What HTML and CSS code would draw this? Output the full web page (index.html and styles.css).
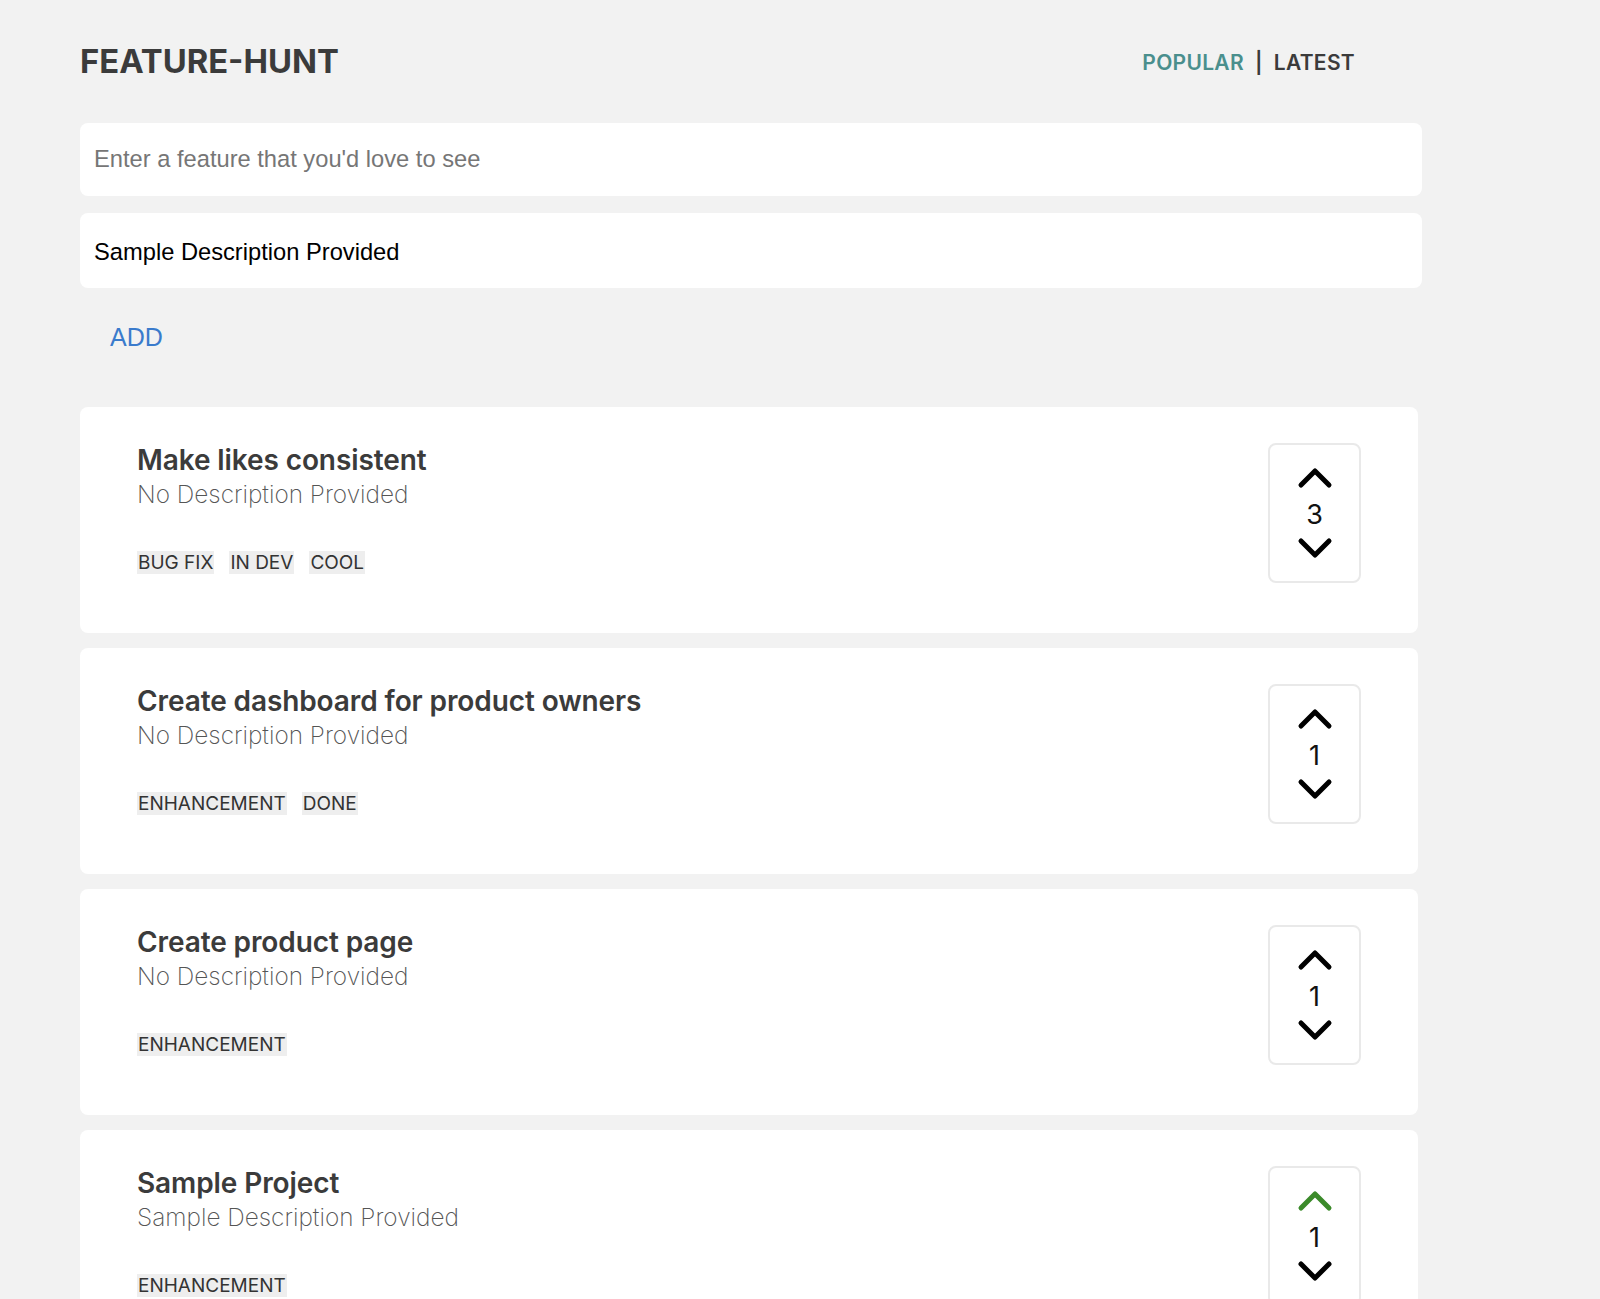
FILE: index.html
```html
<!DOCTYPE html>
<html lang="en">
<head>
<meta charset="utf-8">
<title>Feature-Hunt</title>
<link rel="stylesheet" href="styles.css">
</head>
<body>
<div class="page">
  <header class="header">
    <h1 class="logo">FEATURE-HUNT</h1>
    <nav class="nav">
      <a class="nav-link active">POPULAR</a>
      <span class="nav-sep">|</span>
      <a class="nav-link">LATEST</a>
    </nav>
  </header>

  <form class="add-form">
    <input class="field" type="text" placeholder="Enter a feature that you'd love to see">
    <input class="field field-desc" type="text" value="Sample Description Provided">
    <button class="add-btn" type="button">ADD</button>
  </form>

  <ul class="features">
    <li class="card">
      <div class="card-body">
        <h2 class="card-title">Make likes consistent</h2>
        <p class="card-desc">No Description Provided</p>
        <div class="tags"><span class="tag">BUG FIX</span><span class="tag">IN DEV</span><span class="tag">COOL</span></div>
      </div>
      <div class="vote">
        <svg class="chev" viewBox="0 0 36 24"><polyline points="4,20 18,6 32,20"/></svg>
        <span class="count">3</span>
        <svg class="chev down" viewBox="0 0 36 24"><polyline points="4,4 18,18 32,4"/></svg>
      </div>
    </li>
    <li class="card">
      <div class="card-body">
        <h2 class="card-title">Create dashboard for product owners</h2>
        <p class="card-desc">No Description Provided</p>
        <div class="tags"><span class="tag">ENHANCEMENT</span><span class="tag">DONE</span></div>
      </div>
      <div class="vote">
        <svg class="chev" viewBox="0 0 36 24"><polyline points="4,20 18,6 32,20"/></svg>
        <span class="count">1</span>
        <svg class="chev down" viewBox="0 0 36 24"><polyline points="4,4 18,18 32,4"/></svg>
      </div>
    </li>
    <li class="card">
      <div class="card-body">
        <h2 class="card-title">Create product page</h2>
        <p class="card-desc">No Description Provided</p>
        <div class="tags"><span class="tag">ENHANCEMENT</span></div>
      </div>
      <div class="vote">
        <svg class="chev" viewBox="0 0 36 24"><polyline points="4,20 18,6 32,20"/></svg>
        <span class="count">1</span>
        <svg class="chev down" viewBox="0 0 36 24"><polyline points="4,4 18,18 32,4"/></svg>
      </div>
    </li>
    <li class="card">
      <div class="card-body">
        <h2 class="card-title">Sample Project</h2>
        <p class="card-desc">Sample Description Provided</p>
        <div class="tags"><span class="tag">ENHANCEMENT</span></div>
      </div>
      <div class="vote">
        <svg class="chev voted" viewBox="0 0 36 24"><polyline points="4,20 18,6 32,20"/></svg>
        <span class="count">1</span>
        <svg class="chev down" viewBox="0 0 36 24"><polyline points="4,4 18,18 32,4"/></svg>
      </div>
    </li>
  </ul>
</div>
</body>
</html>
```

FILE: styles.css
```css
* { box-sizing: border-box; }

html, body {
  margin: 0;
  padding: 0;
  background: #f2f2f2;
}

body {
  font-family: Inter, "Noto Sans", "Liberation Sans", sans-serif;
  color: #3b3b3b;
}

.page {
  width: 1342px;
  margin-left: 80px;
  padding-top: 41px;
}

.header {
  display: flex;
  justify-content: space-between;
  align-items: flex-start;
  padding-right: 67px;
}

.logo {
  margin: 0;
  font-size: 32.8px;
  line-height: 40px;
  font-weight: 700;
  color: #3b3b3b;
  letter-spacing: 0;
}

.nav {
  display: flex;
  align-items: center;
  gap: 11px;
  padding-top: 8px;
  font-size: 21px;
  line-height: 28px;
  font-weight: 600;
  letter-spacing: 0.3px;
}

.nav-link { color: #3b3b3b; cursor: pointer; }
.nav-link.active { color: #4a8f8d; }
.nav-sep { color: #3b3b3b; }

.add-form {
  display: flex;
  flex-direction: column;
  margin-top: 42px;
}

.field {
  display: block;
  width: 100%;
  height: 73px;
  border: none;
  border-radius: 8px;
  background: #ffffff;
  padding: 0 14px;
  font-family: "Liberation Sans", Arial, sans-serif;
  font-size: 23.7px;
  color: #000;
  outline: none;
}

.field::placeholder { color: #767676; }

.field-desc {
  margin-top: 17px;
  height: 75px;
  padding-top: 3px;
}

.add-btn {
  align-self: flex-start;
  margin: 35px 0 0 30px;
  padding: 0;
  border: none;
  background: none;
  font-family: "Liberation Sans", Arial, sans-serif;
  font-size: 25px;
  line-height: 29px;
  color: #3a7bcc;
  cursor: pointer;
}

.features {
  list-style: none;
  margin: 55px 0 0;
  padding: 0;
  width: 1338px;
  display: flex;
  flex-direction: column;
  gap: 15px;
}

.card {
  display: flex;
  justify-content: space-between;
  align-items: flex-start;
  background: #ffffff;
  border-radius: 8px;
  padding: 36px 57px 50px 57px;
}

.card-title {
  margin: 0;
  font-size: 28px;
  line-height: 35px;
  font-weight: 600;
  letter-spacing: -0.1px;
  color: #3b3b3b;
}

.card-desc {
  margin: 1px 0 0;
  font-size: 24.4px;
  line-height: 30px;
  font-weight: 200;
  color: #555555;
}

.tags {
  display: flex;
  gap: 15px;
  margin-top: 42px;
}

.tag {
  background: #eeeeee;
  padding: 0 1px;
  font-size: 19px;
  line-height: 23px;
  color: #333333;
}

.vote {
  width: 93px;
  height: 140px;
  border: 2px solid #e9e9e9;
  border-radius: 8px;
  display: flex;
  flex-direction: column;
  align-items: center;
  padding-top: 20px;
}

.chev {
  width: 36px;
  height: 24px;
  display: block;
}

.chev polyline {
  fill: none;
  stroke: #000;
  stroke-width: 5;
  stroke-linecap: round;
  stroke-linejoin: round;
}

.chev.voted polyline { stroke: #3b8a2a; }

.count {
  margin-top: 10px;
  font-size: 27px;
  line-height: 32px;
  color: #111;
}

.chev.down { margin-top: 6px; }
```
